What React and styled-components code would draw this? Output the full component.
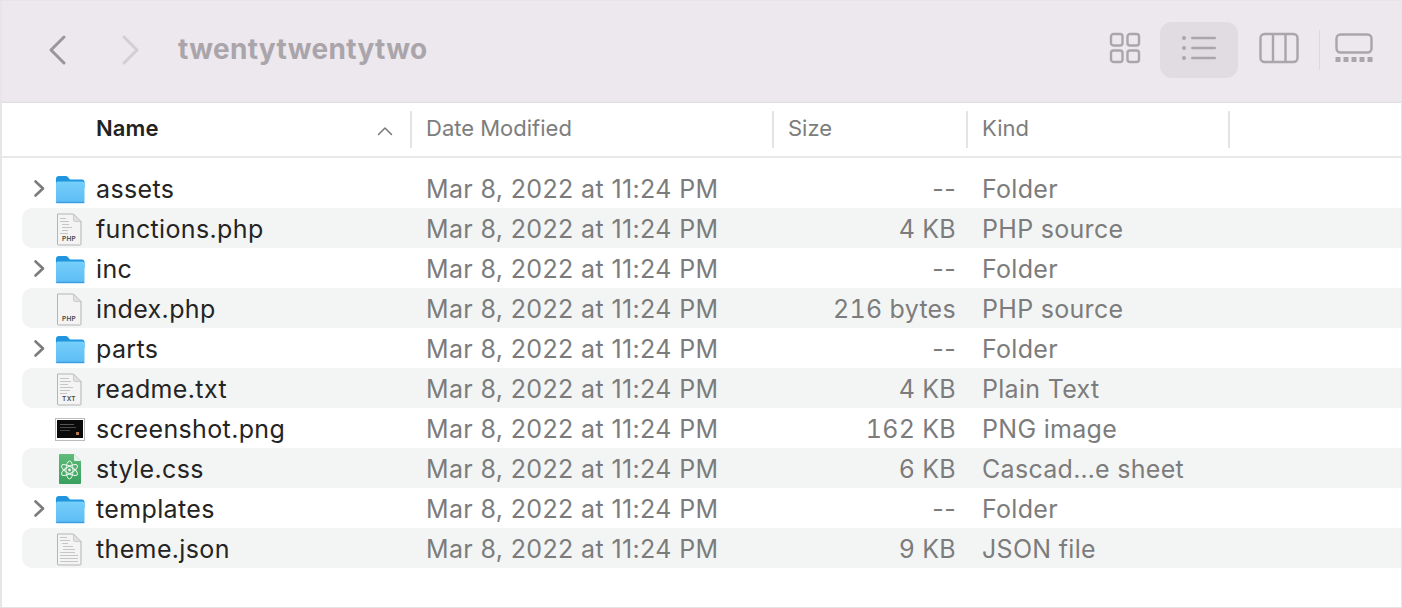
import React from "react";
import styled, { createGlobalStyle } from "styled-components";

const Global = createGlobalStyle`
  html, body { margin: 0; padding: 0; background: #fff; }
  body { font-family: Inter, "Liberation Sans", sans-serif; -webkit-font-smoothing: antialiased; }
`;

const Win = styled.div`
  width: 1402px; height: 608px; box-sizing: border-box; overflow: hidden;
  border-left: 2px solid #e6e6e6; border-right: 1px solid #e6e6e6; border-bottom: 1px solid #e3e3e3;
  background: #fff; display: flex; flex-direction: column;
`;
const Toolbar = styled.div`
  height: 103px; box-sizing: border-box; flex: none;
  background: #ece8ed; border-top: 1px solid #e6e5e6; border-bottom: 1px solid #dfdddf;
  display: flex; align-items: center; padding: 0 28px 4px 44px;
`;
const Nav = styled.div`display: flex; align-items: center; gap: 52px; margin-right: 36px;`;
const Title = styled.div`
  font-size: 28px; font-weight: 700; color: #aaa5ab; letter-spacing: 0.33px; flex: 1; line-height: 32px; margin-bottom: 2px;
`;
const Views = styled.div`
  display: flex; align-items: center;
  svg { margin-bottom: 3px; }
`;
const ViewBtn = styled.div`
  width: 78px; height: 56px; border-radius: 12px; display: flex; align-items: center; justify-content: center;
  margin: 0 21px 0 19px;
  background: ${p => (p.$active ? "#e0dce1" : "transparent")};
`;
const ViewGap = styled.div`width: 20px;`;
const Divider = styled.div`width: 1px; height: 40px; background: #dcd9dd; margin: 0 15px 0 0;`;

const Header = styled.div`
  height: 55px; box-sizing: border-box; flex: none; border-bottom: 2px solid #e8e8e8;
  display: grid; grid-template-columns: 410px 362px 194px 262px 1fr; align-items: center;
`;
const HeadCell = styled.div`
  height: 37px; box-sizing: border-box; display: flex; align-items: center; justify-content: space-between;
  padding: 0 16px 4px; font-size: 22px; letter-spacing: ${p => (p.$bold ? "0.1px" : "0")}; border-right: ${p => (p.$last ? "0" : "2px solid #e4e4e4")};
  color: ${p => (p.$bold ? "#222" : "#7d7d7d")}; font-weight: ${p => (p.$bold ? 600 : 400)};
  padding-left: ${p => (p.$bold ? "94px" : "14px")}; padding-right: ${p => (p.$bold ? "17px" : "16px")};
`;
const SortArrow = styled.svg`margin-top: 6px;`;
const List = styled.div`padding-top: 10px; display: flex; flex-direction: column;`;
const Row = styled.div`
  height: 40px; box-sizing: border-box; padding-top: 2px; margin-left: 20px;
  display: grid; grid-template-columns: 405px 347px 182px 1fr; align-items: center;
  font-size: 25px; line-height: 38px; color: #7c7c7c; letter-spacing: 0.36px;
  background: ${p => (p.$stripe ? "#f3f5f4" : "transparent")};
  border-radius: 10px 0 0 10px;
`;
const NameCell = styled.div`display: flex; align-items: center; position: relative; padding-left: 11px;`;
const Chevron = styled.div`width: 22px; display: flex; align-items: center; flex: none;`;
const IconBox = styled.div`width: 31px; height: 38px; display: flex; align-items: center; justify-content: center; flex: none; margin: 0 10px 0 -1px;`;
const Name = styled.span`color: #242424; margin-left: 1px;`;
const DateCell = styled.div`margin-left: -1px;`;
const Size = styled.div`text-align: right; font-variant-numeric: ${p => (p.$dash ? "normal" : "tabular-nums")}; letter-spacing: ${p => (p.$dash ? "0.36px" : "0.3px")};`;
const Kind = styled.div`padding-left: 26px; white-space: nowrap; letter-spacing: 0.3px;`;
const DocSvg = styled.svg`margin-right: 1px;`;

const ChevronIcon = () => (
  <svg width="14" height="20" viewBox="0 0 14 20"><path d="M2.500 2.500 10 9.500 2.500 16.500" fill="none" stroke="#7b7b7b" strokeWidth="2.600" strokeLinecap="round" strokeLinejoin="round" /></svg>
);
const Folder = () => (
  <svg width="30" height="29" viewBox="0 0 30 29">
    <defs>
      <linearGradient id="fg" x1="0" y1="0" x2="0" y2="1"><stop offset="0" stopColor="#76cffb" /><stop offset="1" stopColor="#5cbcf3" /></linearGradient>
    </defs>
    <path d="M1 4a3 3 0 0 1 3-3h6.500c1.400 0 2 .6 3 1.700L15 4.500h12a2.500 2.500 0 0 1 2.500 2.500v6H1z" fill="#1f95df" />
    <rect x="1" y="6.500" width="28.500" height="21.500" rx="2" fill="url(#fg)" />
    <rect x="1" y="26.800" width="28.500" height="1.400" rx=".7" fill="#3f9fe2" />
  </svg>
);
const Doc = ({ label, lines }) => (
  <DocSvg width="26" height="33" viewBox="0 0 26 33">
    <path d="M1.500 1h16l7.500 7.500V31a1 1 0 0 1-1 1H2.500a1 1 0 0 1-1-1z" fill="#f4f4f4" stroke="#b4b4b4" strokeWidth="1" />
    <path d="M17.500 1v6.500a1 1 0 0 0 1 1H25z" fill="#e0e0e0" stroke="#c4c4c4" strokeWidth=".8" />
    {lines && lines.map((l, i) => <rect key={i} x={l[0]} y={l[1]} width={l[2]} height="1" fill="#c6c6c6" />)}
    {label && <text x="13" y="28" textAnchor="middle" fontFamily="Inter, sans-serif" fontSize="6.500" fontWeight="600" letterSpacing=".3" fill="#4a4a4a">{label}</text>}
  </DocSvg>
);
const codeLines = [[4,5,6],[4,8,9],[6,11,7],[6,14,10],[6,17,6],[4,20,8]];
const txtLines = [[4,5,9],[4,8,11],[4,11,8],[4,14,13],[4,17,10],[4,20,7]];
const jsonLines = [[4,4,7],[4,7,10],[6,10,6],[7,13,10],[7,16,12],[4,19,15],[4,22,18],[4,25,18],[4,28,18]];

const Shot = () => (
  <svg width="30" height="23" viewBox="0 0 30 23">
    <rect x=".5" y=".5" width="29" height="22" fill="#fff" stroke="#bbb" />
    <rect x="2" y="2" width="26" height="18" fill="#0a0a0a" />
    <rect x="5" y="6" width="14" height="1" fill="#555" /><rect x="5" y="9" width="16" height="1" fill="#4a4a4a" /><rect x="5" y="12" width="10" height="1" fill="#444" />
    <rect x="21" y="14" width="3" height="3" fill="#b97a4a" />
  </svg>
);
const Css = () => (
  <svg width="24" height="32" viewBox="0 0 24 32">
    <defs><linearGradient id="cg" x1="0" y1="0" x2="0" y2="1"><stop offset="0" stopColor="#62bb7a" /><stop offset="1" stopColor="#37a05c" /></linearGradient></defs>
    <path d="M1 2a1 1 0 0 1 1-1h14l7 7v22a1 1 0 0 1-1 1H2a1 1 0 0 1-1-1z" fill="url(#cg)" />
    <path d="M16 1v6a1 1 0 0 0 1 1h6z" fill="#e6f3ea" />
    <g fill="none" stroke="#e9f6ec" strokeWidth="1">
      <ellipse cx="11.500" cy="17" rx="9" ry="3.500" transform="rotate(30 11.500 17)" />
      <ellipse cx="11.500" cy="17" rx="9" ry="3.500" transform="rotate(-30 11.500 17)" />
      <ellipse cx="11.500" cy="17" rx="9" ry="3.500" transform="rotate(90 11.500 17)" />
    </g>
    <circle cx="11.500" cy="17" r="1.400" fill="#e9f6ec" />
  </svg>
);

const S = "#aaa5ab";
const Grid = () => (
  <svg width="32" height="32" viewBox="0 0 32 32" fill="none" stroke={S} strokeWidth="2.400">
    <rect x="2" y="2" width="11.500" height="11.500" rx="2.500" /><rect x="18.500" y="2" width="11.500" height="11.500" rx="2.500" />
    <rect x="2" y="18.500" width="11.500" height="11.500" rx="2.500" /><rect x="18.500" y="18.500" width="11.500" height="11.500" rx="2.500" />
  </svg>
);
const ListIc = () => (
  <svg width="36" height="26" viewBox="0 0 36 26" fill={S}>
    <circle cx="3" cy="3" r="2" /><circle cx="3" cy="13" r="2" /><circle cx="3" cy="23" r="2" />
    <rect x="10" y="1.800" width="25" height="2.400" rx="1.200" /><rect x="10" y="11.800" width="25" height="2.400" rx="1.200" /><rect x="10" y="21.800" width="25" height="2.400" rx="1.200" />
  </svg>
);
const Cols = () => (
  <svg width="40" height="32" viewBox="0 0 40 32" fill="none" stroke={S} strokeWidth="2.400">
    <rect x="1.500" y="2" width="37" height="28" rx="4" /><path d="M14 2v28M26.500 2v28" />
  </svg>
);
const Gallery = () => (
  <svg width="38" height="30" viewBox="0 0 38 30" fill={S}>
    <rect x="1.500" y="1.500" width="35" height="18" rx="4" fill="none" stroke={S} strokeWidth="2.400" />
    {[0, 8, 16, 24, 32].map(x => <rect key={x} x={x + 0.500} y="24" width="5" height="5" />)}
  </svg>
);

const date = "Mar 8, 2022 at 11:24 PM";
const rows = [
  ["assets", <Folder />, "--", "Folder", true],
  ["functions.php", <Doc label="PHP" lines={codeLines} />, "4 KB", "PHP source"],
  ["inc", <Folder />, "--", "Folder", true],
  ["index.php", <Doc label="PHP" />, "216 bytes", "PHP source"],
  ["parts", <Folder />, "--", "Folder", true],
  ["readme.txt", <Doc label="TXT" lines={txtLines} />, "4 KB", "Plain Text"],
  ["screenshot.png", <Shot />, "162 KB", "PNG image"],
  ["style.css", <Css />, "6 KB", "Cascad…e sheet"],
  ["templates", <Folder />, "--", "Folder", true],
  ["theme.json", <Doc lines={jsonLines} />, "9 KB", "JSON file"],
];

export default function App() {
  return (
    <Win>
      <Global />
      <Toolbar>
        <Nav>
          <svg width="22" height="32" viewBox="0 0 22 32"><path d="M18 3 5 16l13 13" fill="none" stroke="#9a969c" strokeWidth="3" strokeLinecap="round" strokeLinejoin="round" /></svg>
          <svg width="22" height="32" viewBox="0 0 22 32"><path d="M4 3l13 13L4 29" fill="none" stroke="#d2ced3" strokeWidth="3" strokeLinecap="round" strokeLinejoin="round" /></svg>
        </Nav>
        <Title>twentytwentytwo</Title>
        <Views>
          <Grid />
          <ViewBtn $active><ListIc /></ViewBtn>
          <Cols />
          <ViewGap />
          <Divider />
          <Gallery />
        </Views>
      </Toolbar>
      <Header>
        <HeadCell $bold>Name
          <SortArrow width="16" height="10" viewBox="0 0 16 10"><path d="M1.500 8.500 8 2l6.500 6.500" fill="none" stroke="#777" strokeWidth="1.500" strokeLinecap="round" strokeLinejoin="round" /></SortArrow>
        </HeadCell>
        <HeadCell>Date Modified</HeadCell>
        <HeadCell>Size</HeadCell>
        <HeadCell>Kind</HeadCell>
        <HeadCell $last />
      </Header>
      <List>
        {rows.map((r, i) => (
          <Row key={r[0]} $stripe={i % 2 === 1}>
            <NameCell>
              <Chevron>{r[4] && <ChevronIcon />}</Chevron>
              <IconBox>{r[1]}</IconBox>
              <Name>{r[0]}</Name>
            </NameCell>
            <DateCell>{date}</DateCell>
            <Size $dash={r[2] === "--"}>{r[2]}</Size>
            <Kind>{r[3]}</Kind>
          </Row>
        ))}
      </List>
    </Win>
  );
}
